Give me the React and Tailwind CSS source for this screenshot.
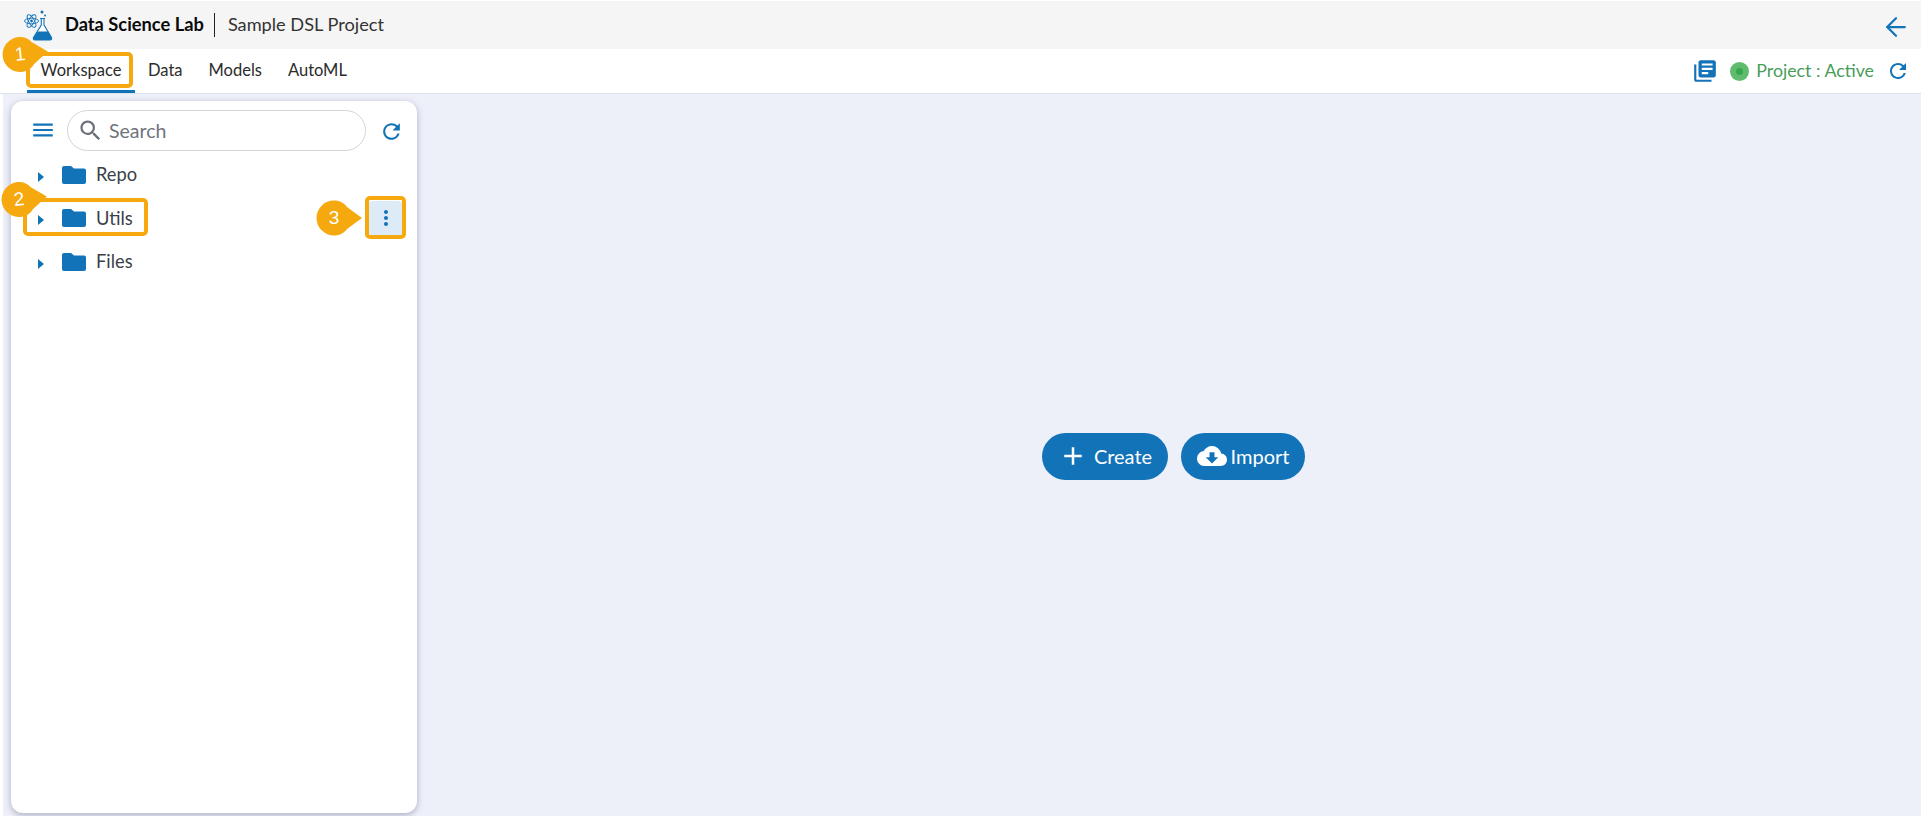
import { ArrowLeft } from 'lucide-react'
import { MdMenu, MdSearch, MdRefresh, MdMoreVert, MdLibraryBooks, MdCloudDownload, MdAdd } from 'react-icons/md'

const FONT = "font-['Lato','Noto_Sans',sans-serif]"
const TABS = ['Workspace', 'Data', 'Models', 'AutoML']
const TREE = ['Repo', 'Utils', 'Files']

// orange numbered callout, the tail points to the right
function Marker({ n, className }) {
  return (
    <div className={`absolute w-[46px] h-[36px] ${className}`}>
      <svg width="46" height="36" viewBox="0 0 46 36">
        <path d="M18 .5C24 .5 28 3 31 7L46 18 31 29C28 33 24 35.500 18 35.500A17.500 17.500 0 0 1 18 .500z" fill="#f5a90f" />
      </svg>
      <span className="absolute left-0 top-0 w-[36px] h-[36px] flex items-center justify-center text-white text-[19px] font-['Liberation_Sans',sans-serif]">{n}</span>
    </div>
  )
}

function Logo() {
  return (
    <svg width="32" height="32" viewBox="0 0 32 32" fill="none" className="shrink-0">
      <g stroke="#1273b9" strokeWidth="0.9">
        <ellipse cx="9.500" cy="12" rx="7" ry="2.800" />
        <ellipse cx="9.500" cy="12" rx="7" ry="2.800" transform="rotate(60 9.500 12)" />
        <ellipse cx="9.500" cy="12" rx="7" ry="2.800" transform="rotate(120 9.500 12)" />
      </g>
      <circle cx="9.500" cy="12" r="1.400" fill="#1273b9" />
      <path d="M18 9.500h5M19.300 9.500v6.500L11.500 28.500c-.6 1.200.1 2.500 1.500 2.500h15c1.400 0 2.100-1.300 1.500-2.500L22 16V9.500" stroke="#1273b9" strokeWidth="1.100" fill="#fff" />
      <path d="M15.500 22.500h11l3 6c.5 1.200-.1 2.500-1.500 2.500H13c-1.400 0-2-1.300-1.500-2.500z" fill="#1273b9" />
      <circle cx="20" cy="3" r="1.500" fill="#1273b9" />
      <circle cx="23" cy="6.500" r="1" fill="#1273b9" />
    </svg>
  )
}

function Folder() {
  return (
    <svg width="24" height="18" viewBox="0 0 24 18" className="shrink-0">
      <path d="M2 0h7l3 2.500h10a2 2 0 0 1 2 2V16a2 2 0 0 1-2 2H2a2 2 0 0 1-2-2V2a2 2 0 0 1 2-2z" fill="#1273b9" />
    </svg>
  )
}

function TreeRow({ label }) {
  return (
    <div className="h-[43.500px] flex items-center pl-[27px] pr-[15px]">
      <svg width="6" height="10" viewBox="0 0 6 10" className="mt-[4px] shrink-0">
        <path d="M0 0l6 5-6 5z" fill="#1273b9" />
      </svg>
      <div className="ml-[18px]"><Folder /></div>
      <span className="ml-[10px] text-[18.300px] text-[#3a3f4a]">{label}</span>
      {label === 'Utils' && (
        <div className="ml-auto w-[33px] h-[35px] rounded-[3px] bg-[#dcebf6] flex items-center justify-center text-[#1273b9]">
          <MdMoreVert size={24} />
        </div>
      )}
    </div>
  )
}

export default function App() {
  return (
    <div className={`relative h-[816px] w-full overflow-hidden bg-white flex flex-col ${FONT}`}>
      <header className="h-[48px] mt-px shrink-0 bg-[#f5f5f5] flex items-center pl-[22px] pr-[10px]">
        <Logo />
        <span className="ml-[11px] text-[18.300px] font-bold text-[#0b0b0b]">Data Science Lab</span>
        <span className="ml-[10px] w-px h-6 bg-[#222]" />
        <span className="ml-[13px] text-[18.200px] text-[#333]">Sample DSL Project</span>
        <ArrowLeft size={30} strokeWidth={1.800} className="ml-auto mt-[4px] text-[#1273b9]" />
      </header>

      <nav className="h-[45px] shrink-0 bg-white border-b border-[#dfe1e8] flex items-stretch pl-[27px] pr-[11px]">
        {TABS.map((tab) => (
          <div
            key={tab}
            className={`px-[13px] pt-[2px] flex items-center text-[16.500px] text-[#2b2b2b] border-b-[3px] ${tab === 'Workspace' ? 'w-[108px] justify-center border-[#1273b9]' : 'border-transparent'}`}
          >
            {tab}
          </div>
        ))}
        <div className="ml-auto flex items-center">
          <MdLibraryBooks size={26} className="text-[#1273b9]" />
          <span className="ml-[12px] w-[19px] h-[19px] rounded-full bg-[#5fbb6d] flex items-center justify-center">
            <span className="w-[7px] h-[7px] rounded-full bg-[#35a94a]" />
          </span>
          <span className="ml-[7px] mb-[2px] text-[17.800px] text-[#4a9c5a]">Project : Active</span>
          <MdRefresh size={24} className="ml-[12px] text-[#1273b9]" />
        </div>
      </nav>

      <main className="flex-1 ml-[3px] bg-[#edf0f9] flex pl-2 pt-[7px] pb-[3px]">
        <aside className="w-[406px] bg-white rounded-xl shadow-[0_2px_6px_rgba(70,75,110,0.4)] flex flex-col">
          <div className="h-[52px] flex items-start pl-[19px] pr-[13px] pt-[9px]">
            <MdMenu size={26} className="mt-[7px] text-[#1273b9]" />
            <div className="ml-[11px] w-[299px] h-[41px] rounded-full border border-[#d2d4da] flex items-center pl-[9px] text-[#6b6f78]">
              <MdSearch size={27} />
              <span className="ml-[5px] text-[19.500px] text-[#70747c]">Search</span>
            </div>
            <MdRefresh size={25} className="mt-[9px] ml-auto text-[#1273b9]" />
          </div>
          <div>
            {TREE.map((label) => (
              <TreeRow key={label} label={label} />
            ))}
          </div>
        </aside>

        <div className="flex-1 flex items-start justify-center gap-[13px] pt-[332px] pl-[9px]">
          <button className="h-[47px] w-[126px] rounded-full bg-[#1273b9] text-white flex items-center justify-center gap-[6px] pb-[2px] text-[20px]">
            <MdAdd size={30} />
            Create
          </button>
          <button className="h-[47px] w-[124px] rounded-full bg-[#1273b9] text-white flex items-center justify-center gap-[4px] pb-[2px] text-[20px]">
            <MdCloudDownload size={30} />
            Import
          </button>
        </div>
      </main>

      {/* annotation overlays */}
      <div className="absolute left-[26px] top-[52px] w-[107px] h-[36px] border-4 border-[#f5a90f] rounded-[5px]" />
      <div className="absolute left-[23px] top-[198px] w-[125px] h-[38px] border-4 border-[#f5a90f] rounded-[5px]" />
      <div className="absolute left-[365px] top-[196px] w-[41px] h-[43px] border-4 border-[#f5a90f] rounded-[5px]" />
      <Marker n="1" className="left-[2px] top-[36px] -rotate-6" />
      <Marker n="2" className="left-[1px] top-[181px] -rotate-6" />
      <Marker n="3" className="left-[316px] top-[200px]" />
    </div>
  )
}
